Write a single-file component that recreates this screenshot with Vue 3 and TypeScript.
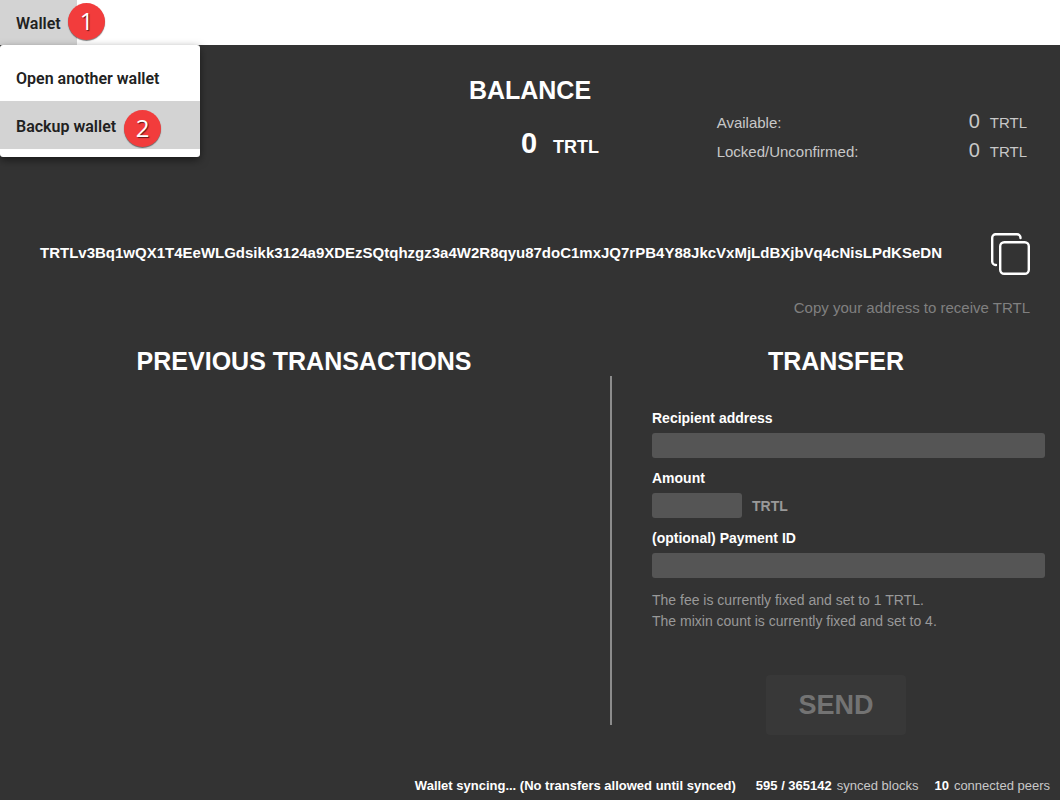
<script setup lang="ts">
import { ref } from 'vue'

interface BalanceRow {
  label: string
  amount: number
}

const unit = 'TRTL'
const address =
  'TRTLv3Bq1wQX1T4EeWLGdsikk3124a9XDEzSQtqhzgz3a4W2R8qyu87doC1mxJQ7rPB4Y88JkcVxMjLdBXjbVq4cNisLPdKSeDN'
const total = 0
const balances: BalanceRow[] = [
  { label: 'Available:', amount: 0 },
  { label: 'Locked/Unconfirmed:', amount: 0 },
]

const recipient = ref('')
const amount = ref('')
const paymentId = ref('')
const synced = ref(false)

function copyAddress(): void {
  navigator.clipboard?.writeText(address)
}
</script>

<template>
  <div class="app">
    <nav class="menubar">
      <div class="menu">
        <button type="button" class="menu-title" aria-haspopup="true" aria-expanded="true">Wallet</button>
        <span class="badge badge-title">1</span>
        <div class="dropdown">
          <button type="button" class="item">Open another wallet</button>
          <button type="button" class="item active">
            Backup wallet
            <span class="badge badge-item">2</span>
          </button>
        </div>
      </div>
    </nav>

    <main class="content">
      <section class="overview">
        <div class="balance">
          <h2>BALANCE</h2>
          <p class="total"><span class="total-value">{{ total }}</span><span class="total-unit">{{ unit }}</span></p>
        </div>
        <dl class="details">
          <div v-for="row in balances" :key="row.label" class="detail">
            <dt>{{ row.label }}</dt>
            <dd><span class="detail-value">{{ row.amount }}</span>{{ unit }}</dd>
          </div>
        </dl>
      </section>

      <section class="address">
        <div class="address-row">
          <span class="address-text">{{ address }}</span>
          <button type="button" class="copy" aria-label="Copy address" @click="copyAddress">
            <svg width="39" height="42" viewBox="0 0 39 42" fill="none" stroke="#fff" stroke-width="2.400" stroke-linecap="round">
              <path d="M5 32H4.700A3.500 3.500 0 0 1 1.200 28.500V4.700A3.500 3.500 0 0 1 4.700 1.200H26A3.500 3.500 0 0 1 29.500 4.700V5" />
              <rect x="9.200" y="9.200" width="28.600" height="31.600" rx="4" />
            </svg>
          </button>
        </div>
        <p class="hint">Copy your address to receive TRTL</p>
      </section>

      <section class="panels">
        <div class="panel history">
          <h2>PREVIOUS TRANSACTIONS</h2>
          <div class="transactions"></div>
        </div>
        <div class="panel">
          <h2>TRANSFER</h2>
          <form class="transfer" @submit.prevent>
            <div class="field">
              <label for="recipient">Recipient address</label>
              <input id="recipient" v-model="recipient" type="text" />
            </div>
            <div class="field">
              <label for="amount">Amount</label>
              <div class="amount-row">
                <input id="amount" v-model="amount" class="short" type="text" />
                <span class="amount-unit">{{ unit }}</span>
              </div>
            </div>
            <div class="field">
              <label for="payment">(optional) Payment ID</label>
              <input id="payment" v-model="paymentId" type="text" />
            </div>
            <p class="notes">
              The fee is currently fixed and set to 1 TRTL.<br />
              The mixin count is currently fixed and set to 4.
            </p>
          </form>
          <button type="button" class="send" :disabled="!synced">SEND</button>
        </div>
      </section>
    </main>

    <footer class="status">
      <strong class="sync">Wallet syncing... (No transfers allowed until synced)</strong>
      <span class="stat"><strong>595 / 365142</strong> synced blocks</span>
      <span class="stat"><strong>10</strong> connected peers</span>
    </footer>
  </div>
</template>

<style>
body {
  margin: 0;
  background: #333;
}
</style>

<style scoped>
.app {
  display: flex;
  flex-direction: column;
  min-height: 100vh;
  box-sizing: border-box;
  background: #333;
  color: #fff;
  font-family: "Liberation Sans", Arial, sans-serif;
  font-size: 14px;
}

h2,
p,
dl,
dd {
  margin: 0;
}

button,
input {
  border: 0;
  font: inherit;
}

.menubar {
  display: flex;
  height: 45px;
  background: #fff;
}

.menu {
  position: relative;
}

.menu-title,
.item {
  padding: 2px 16px 0;
  color: #212121;
  font-family: Roboto, sans-serif;
  font-size: 16px;
  font-weight: 600;
  text-align: left;
}

.menu-title {
  height: 45px;
  background: #d3d3d3;
}

.dropdown {
  position: absolute;
  z-index: 1;
  top: 45px;
  left: 0;
  display: flex;
  flex-direction: column;
  width: 200px;
  padding: 8px 0;
  box-sizing: border-box;
  border-radius: 3px;
  background: #fff;
  box-shadow: 0 3px 8px rgba(0, 0, 0, 0.5);
}

.item {
  position: relative;
  height: 48px;
  background: #fff;
}

.item.active {
  background: #d3d3d3;
}

.badge {
  position: absolute;
  z-index: 2;
  width: 37px;
  height: 37px;
  border-radius: 50%;
  background: #f23c3c;
  box-shadow: 0 1px 1px rgba(0, 0, 0, 0.5);
  color: #fff;
  font-family: "Open Sans", sans-serif;
  font-size: 24px;
  font-weight: 500;
  line-height: 36px;
  text-align: center;
  text-shadow: 1px 1px 1px rgba(0, 0, 0, 0.6);
}

.badge-title {
  top: 3px;
  left: 68px;
}

.badge-item {
  top: 9px;
  left: 124px;
}

.content {
  flex: 1;
}

h2 {
  font-size: 25px;
  font-weight: 700;
  line-height: 30px;
  text-align: center;
}

.overview {
  display: grid;
  grid-template-columns: 1fr 1fr 1fr;
  padding-top: 30px;
}

.balance {
  grid-column: 2;
}

.total {
  display: flex;
  align-items: baseline;
  justify-content: center;
  gap: 16px;
  padding: 20px 0 0 60px;
  font-weight: 700;
  line-height: 36px;
}

.total-value {
  font-size: 29px;
}

.total-unit {
  font-size: 18px;
}

.details {
  padding: 32px 33px 0 10px;
  color: #c8c8c8;
  font-size: 15px;
}

.detail {
  display: flex;
  align-items: baseline;
  justify-content: space-between;
  height: 29px;
  line-height: 29px;
}

.detail-value {
  margin-right: 10px;
  font-size: 20px;
}

.address {
  padding: 68px 30px 0 40px;
}

.address-row {
  display: flex;
  align-items: center;
  justify-content: space-between;
}

.address-text {
  padding-bottom: 4px;
  font-size: 15px;
  font-weight: 700;
}

.copy {
  display: flex;
  padding: 0;
  background: none;
}

.hint {
  padding-top: 23px;
  color: #808080;
  font-size: 15px;
  line-height: 20px;
  text-align: right;
}

.panels {
  display: grid;
  grid-template-columns: 612fr 448fr;
  padding-top: 28px;
}

.panel {
  display: flex;
  flex-direction: column;
}

.history h2 {
  padding-right: 4px;
}

.transactions {
  flex: 1;
  margin-bottom: 10px;
  border-right: 2px solid #8c8c8c;
}

.transfer {
  display: flex;
  flex-direction: column;
  gap: 10px;
  padding: 32px 15px 0 40px;
}

.field {
  display: flex;
  flex-direction: column;
  gap: 5px;
}

label {
  font-weight: 700;
  line-height: 20px;
}

input {
  width: 100%;
  height: 25px;
  padding: 0 8px;
  box-sizing: border-box;
  border-radius: 3px;
  background: #555;
  color: #fff;
}

.short {
  width: 90px;
}

.amount-row {
  display: flex;
  align-items: center;
  gap: 10px;
}

.amount-unit {
  color: #999;
  font-weight: 700;
}

.notes {
  padding-top: 2px;
  color: #999;
  line-height: 21px;
}

.send {
  align-self: center;
  width: 140px;
  height: 60px;
  margin-top: 43px;
  border-radius: 4px;
  background: #383838;
  color: #737373;
  font-size: 27px;
  font-weight: 700;
}

.status {
  display: flex;
  justify-content: flex-end;
  gap: 16px;
  padding: 0 10px 4px;
  color: #c8c8c8;
  font-size: 13px;
  line-height: 20px;
}

.status strong {
  color: #fff;
}

.sync {
  margin-right: 4px;
}

.stat {
  display: flex;
  gap: 5px;
}
</style>
